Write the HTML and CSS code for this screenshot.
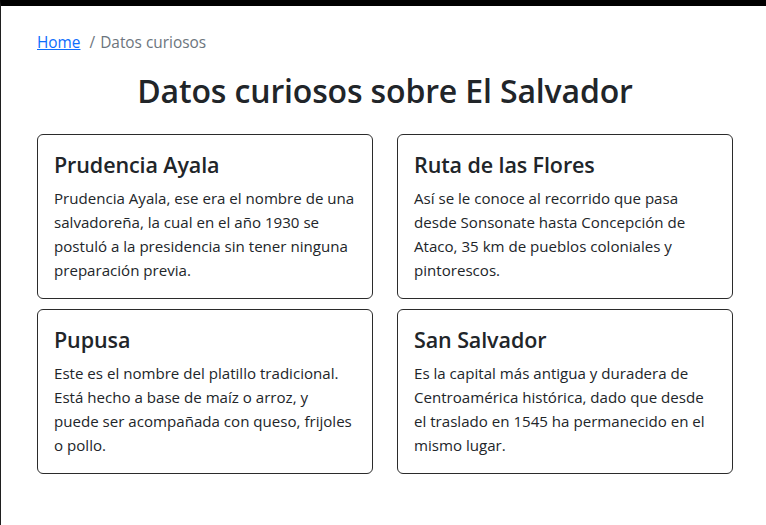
FILE: index.html
```html
<!DOCTYPE html>
<html lang="es">
<head>
<meta charset="utf-8">
<title>Datos curiosos</title>
<link rel="stylesheet" href="styles.css">
</head>
<body>
<div class="frame">
  <main class="container">
    <nav class="breadcrumb" aria-label="breadcrumb">
      <a href="#" class="crumb-link">Home</a>
      <span class="sep">/</span>
      <span class="crumb-active">Datos curiosos</span>
    </nav>
    <h1 class="title">Datos curiosos sobre El Salvador</h1>
    <section class="grid">
      <article class="card">
        <h4 class="card-title">Prudencia Ayala</h4>
        <p class="card-text">Prudencia Ayala, ese era el nombre de una salvadoreña, la cual en el año 1930 se postuló a la presidencia sin tener ninguna preparación previa.</p>
      </article>
      <article class="card">
        <h4 class="card-title">Ruta de las Flores</h4>
        <p class="card-text">Así se le conoce al recorrido que pasa desde Sonsonate hasta Concepción de Ataco, 35 km de pueblos coloniales y pintorescos.</p>
      </article>
      <article class="card">
        <h4 class="card-title">Pupusa</h4>
        <p class="card-text">Este es el nombre del platillo tradicional. Está hecho a base de maíz o arroz, y puede ser acompañada con queso, frijoles o pollo.</p>
      </article>
      <article class="card">
        <h4 class="card-title">San Salvador</h4>
        <p class="card-text">Es la capital más antigua y duradera de Centroamérica histórica, dado que desde el traslado en 1545 ha permanecido en el mismo lugar.</p>
      </article>
    </section>
  </main>
</div>
</body>
</html>
```
FILE: styles.css
```css
* { box-sizing: border-box; }
html, body { margin: 0; padding: 0; background: #fff; }
body {
  font-family: "Open Sans", "Noto Sans", sans-serif;
  color: #212529;
  font-size: 16px;
  line-height: 1.5;
}
.frame {
  min-height: 100vh;
  border-top: 6px solid #000;
  border-left: 1px solid #1f1f1f;
}
.container {
  width: 696px;
  margin-left: 36px;
  padding-top: 25px;
}
.breadcrumb {
  display: flex;
  align-items: baseline;
  font-size: 15.4px;
  line-height: 24px;
}
.crumb-link { color: #0d6efd; text-decoration: underline; }
.sep { color: #6c757d; padding: 0 5px 0 9px; }
.crumb-active { color: #6c757d; }
.title {
  margin: 16px 0 23px;
  text-align: center;
  font-size: 32px;
  line-height: 40px;
  font-weight: 600;
  letter-spacing: -0.15px;
}
.grid {
  display: grid;
  grid-template-columns: 1fr 1fr;
  column-gap: 24px;
  row-gap: 10px;
}
.card {
  border: 1px solid #2b2b2b;
  border-radius: 6px;
  padding: 16px;
}
.card-title {
  margin: 0 0 8px;
  font-size: 21.5px;
  line-height: 27px;
  font-weight: 600;
  letter-spacing: -0.1px;
}
.card-text {
  margin: 0;
  font-size: 15.1px;
  line-height: 24px;
}
```
